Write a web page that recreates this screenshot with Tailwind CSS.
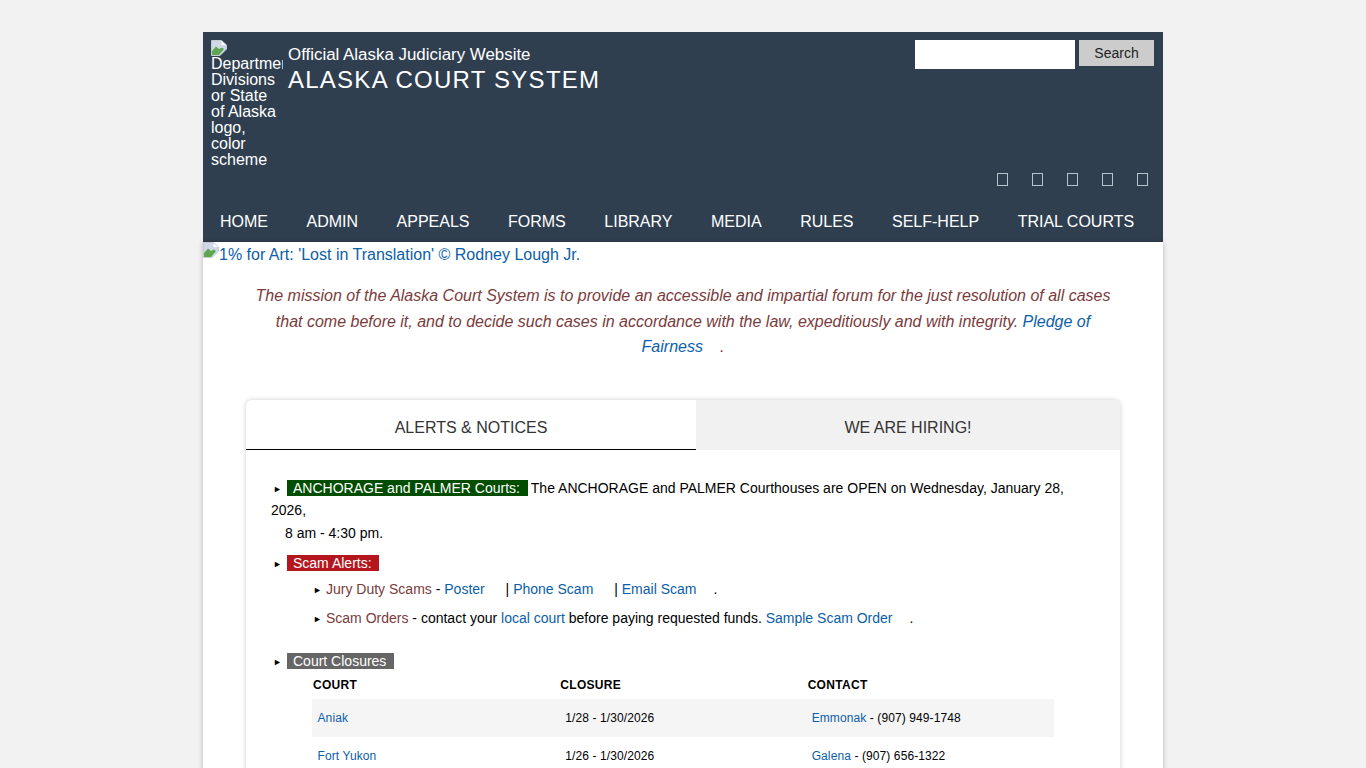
<!DOCTYPE html>
<html lang="en">
<head>
    <meta charset="UTF-8">
    <title>Alaska Court System</title>
    <script src="https://cdn.jsdelivr.net/npm/@tailwindcss/browser@4"></script>
</head>
<body class="bg-[#f2f2f2] h-screen overflow-hidden font-['Liberation_Sans',Arial,sans-serif] text-black">

    <div class="w-[960px] mx-auto mt-[32px]">

        <!-- Header -->
        <header class="bg-[#303f50] text-white h-[210px] flex flex-col">
            <div class="flex h-[168px]">
                <!-- Logo (broken image with alt text) -->
                <div class="w-[72px] ml-[8px] mt-[8px] overflow-hidden text-[16px] leading-[16px] h-[128px]">
                    <svg width="16" height="16" viewBox="0 0 16 16" class="block"><path d="M0.5 0.5H10.5L15.5 5V9L9 15.5H0.5Z" fill="#cfd9e6" stroke="#c4cbd3"/><path d="M10.5 1L15 5H10.5Z" fill="#fff"/><path d="M1 15V11L5 6.5L8 9L11 7.5L13 9L8 15Z" fill="#5fa650"/></svg>
                    <div class="whitespace-pre-line">Department
Divisions
or State
of Alaska
logo,
color
scheme</div>
                </div>
                <div class="ml-[5px] mt-[13px]">
                    <div class="text-[16.9px] leading-[20px]">Official Alaska Judiciary Website</div>
                    <div class="text-[24px] leading-[30px] tracking-[1.25px]">ALASKA COURT SYSTEM</div>
                </div>
                <div class="ml-auto mr-[9px] flex flex-col items-end">
                    <div class="flex items-start gap-[4px] mt-[8px]">
                        <input type="text" class="w-[160px] h-[29px] bg-white">
                        <button class="w-[75px] h-[26px] bg-[#cccccc] text-[#222] text-[14px]">Search</button>
                    </div>
                    <!-- Social icons, font glyphs that did not load -->
                    <div class="flex gap-[24px] mt-[104px] mr-[6px]">
                        <span class="w-[11px] h-[13px] border border-[#b8c2cc]"></span>
                        <span class="w-[11px] h-[13px] border border-[#b8c2cc]"></span>
                        <span class="w-[11px] h-[13px] border border-[#b8c2cc]"></span>
                        <span class="w-[11px] h-[13px] border border-[#b8c2cc]"></span>
                        <span class="w-[11px] h-[13px] border border-[#b8c2cc]"></span>
                    </div>
                </div>
            </div>
            <nav class="flex gap-[38.5px] pl-[17px] pt-[2px] h-[42px] items-center text-[16px]">
                <a href="#">HOME</a>
                <a href="#">ADMIN</a>
                <a href="#">APPEALS</a>
                <a href="#">FORMS</a>
                <a href="#">LIBRARY</a>
                <a href="#">MEDIA</a>
                <a href="#">RULES</a>
                <a href="#">SELF-HELP</a>
                <a href="#">TRIAL COURTS</a>
            </nav>
        </header>

        <div class="bg-white shadow-[0_0_5px_rgba(0,0,0,0.25)]">
            <!-- Hero image link -->
            <a href="#" class="flex text-[16px] leading-[26px] text-[#0b5ea8] h-[24px]">
                <svg width="16" height="16" viewBox="0 0 16 16" class="block shrink-0"><path d="M0.5 0.5H10.5L15.5 5V9L9 15.5H0.5Z" fill="#cfd9e6" stroke="#c4cbd3"/><path d="M10.5 1L15 5H10.5Z" fill="#fff"/><path d="M1 15V11L5 6.5L8 9L11 7.5L13 9L8 15Z" fill="#5fa650"/></svg>
                <span>1% for Art: 'Lost in Translation' © Rodney Lough Jr.</span>
            </a>

            <!-- Mission -->
            <p class="mt-[17px] px-[43px] text-center text-[16px] leading-[25.6px] italic text-[#7b3b3b]">
                The mission of the Alaska Court System is to provide an accessible and impartial forum for the just resolution of all cases that come before it, and to decide such cases in accordance with the law, expeditiously and with integrity. <a href="#" class="text-[#0b5ea8]">Pledge of Fairness<span class="inline-block w-[17px]"></span></a>.
            </p>

            <!-- Tabs card -->
            <div class="mx-[43px] mt-[40px] rounded-t-[6px] shadow-[0_0_5px_rgba(0,0,0,0.2)] bg-white h-[700px]">
                <div class="flex h-[50px] text-[16px] text-[#333]">
                    <div class="w-[450px] border-b border-black flex items-center justify-center pt-[8px]">ALERTS &amp; NOTICES</div>
                    <div class="flex-1 bg-[#f1f1f1] rounded-tr-[6px] flex items-center justify-center pt-[6px]">WE ARE HIRING!</div>
                </div>

                <div class="pl-[25px] pr-[50px] pt-[27px] text-[14px] leading-[22.4px]">
                    <div>
                        <span class="inline-block w-[16px] pl-[2px] text-[9px] leading-[8px] align-[1px]">►</span><span class="bg-[#004d00] text-white pl-[6px] pr-[4px] mr-[3px]">ANCHORAGE and PALMER Courts: </span> The ANCHORAGE and PALMER Courthouses are OPEN on Wednesday, January 28, 2026,<br>
                        <span class="ml-[14px]">8 am - 4:30 pm.</span>
                    </div>

                    <div class="mt-[8px]">
                        <span class="inline-block w-[16px] pl-[2px] text-[9px] leading-[8px] align-[1px]">►</span><span class="bg-[#b5161d] text-white pl-[6px] pr-[7px]">Scam Alerts:</span>
                    </div>
                    <div class="mt-[3.4px] ml-[40px]">
                        <span class="inline-block w-[15px] pl-[2px] text-[9px] leading-[8px] align-[1px]">►</span><span class="text-[#7b3b3b]">Jury Duty Scams</span> - <a href="#" class="text-[#0b5ea8]">Poster</a><span class="inline-block w-[17px]"></span> | <a href="#" class="text-[#0b5ea8]">Phone Scam</a><span class="inline-block w-[17px]"></span> | <a href="#" class="text-[#0b5ea8]">Email Scam</a><span class="inline-block w-[17px]"></span>.
                    </div>
                    <div class="mt-[6.6px] ml-[40px]">
                        <span class="inline-block w-[15px] pl-[2px] text-[9px] leading-[8px] align-[1px]">►</span><span class="text-[#7b3b3b]">Scam Orders</span> - contact your <a href="#" class="text-[#0b5ea8]">local court</a> before paying requested funds. <a href="#" class="text-[#0b5ea8]">Sample Scam Order</a><span class="inline-block w-[17px]"></span>.
                    </div>

                    <div class="mt-[20.6px]">
                        <span class="inline-block w-[16px] pl-[2px] text-[9px] leading-[8px] align-[1px]">►</span><span class="bg-[#666666] text-white pl-[6px] pr-[8px]">Court Closures</span>
                    </div>

                    <!-- Closures table -->
                    <div class="ml-[41px] w-[742px] text-[12px] leading-[14px]">
                        <div class="grid grid-cols-3 h-[27px] pt-[6px] font-bold tracking-[0.3px]">
                            <div class="pl-[1px]">COURT</div>
                            <div class="pl-[1px]">CLOSURE</div>
                            <div class="pl-[1px]">CONTACT</div>
                        </div>
                        <div class="grid grid-cols-3 h-[38px] items-center bg-[#f5f5f5] tracking-[0.1px]">
                            <a href="#" class="pl-[5.5px] text-[#0b5ea8]">Aniak</a>
                            <div class="pl-[6px]">1/28 - 1/30/2026</div>
                            <div class="pl-[5px]"><a href="#" class="text-[#0b5ea8]">Emmonak</a> - (907) 949-1748</div>
                        </div>
                        <div class="grid grid-cols-3 h-[38px] items-center tracking-[0.1px]">
                            <a href="#" class="pl-[5.5px] text-[#0b5ea8]">Fort Yukon</a>
                            <div class="pl-[6px]">1/26 - 1/30/2026</div>
                            <div class="pl-[5px]"><a href="#" class="text-[#0b5ea8]">Galena</a> - (907) 656-1322</div>
                        </div>
                    </div>
                </div>
            </div>
        </div>
    </div>

</body>
</html>
